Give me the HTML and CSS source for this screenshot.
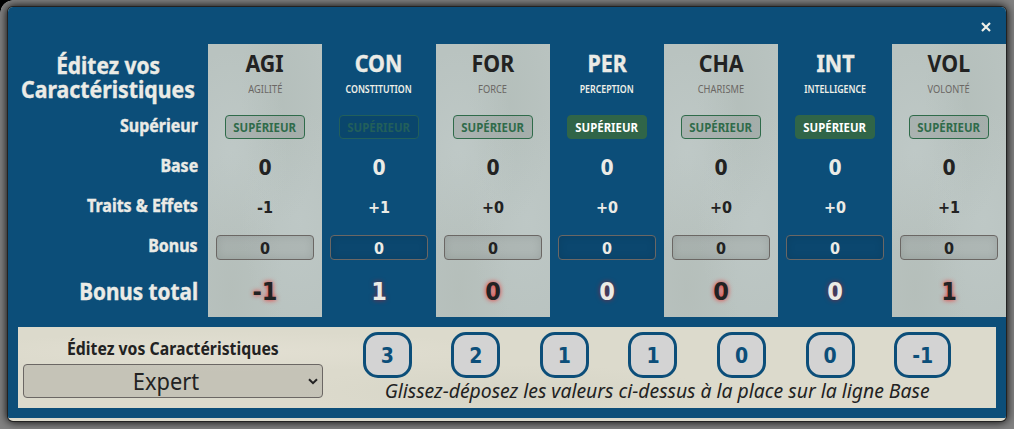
FILE: index.html
```
<!DOCTYPE html>
<html lang="fr">
<head>
<meta charset="utf-8">
<title>Caractéristiques</title>
<link rel="stylesheet" href="styles.css">
</head>
<body>
<span class="corner"></span>
<main class="window">
  <header class="bar">
    <button class="close" aria-label="Fermer"><svg width="10" height="10" viewBox="0 0 10 10"><path d="M1 1L9 9M9 1L1 9"/></svg></button>
  </header>
  <section class="table">
    <div class="labels">
      <h1><span class="t-vos">Éditez vos</span><span class="t-car">Caractéristiques</span></h1>
      <div class="lab"><span>Supérieur</span></div>
      <div class="lab"><span>Base</span></div>
      <div class="lab"><span>Traits &amp; Effets</span></div>
      <div class="lab"><span>Bonus</span></div>
      <div class="lab total"><span>Bonus total</span></div>
    </div>
    <div class="col paper"><b class="abbr">AGI</b><small>AGILITÉ</small><div class="sup"><span>SUPÉRIEUR</span></div><div class="base">0</div><div class="trait">-1</div><div class="bonus">0</div><div class="sum">-1</div></div>
    <div class="col blue"><b class="abbr">CON</b><small>CONSTITUTION</small><div class="sup"><span>SUPÉRIEUR</span></div><div class="base">0</div><div class="trait">+1</div><div class="bonus">0</div><div class="sum">1</div></div>
    <div class="col paper"><b class="abbr">FOR</b><small>FORCE</small><div class="sup"><span>SUPÉRIEUR</span></div><div class="base">0</div><div class="trait">+0</div><div class="bonus">0</div><div class="sum">0</div></div>
    <div class="col blue"><b class="abbr">PER</b><small>PERCEPTION</small><div class="sup on"><span>SUPÉRIEUR</span></div><div class="base">0</div><div class="trait">+0</div><div class="bonus">0</div><div class="sum">0</div></div>
    <div class="col paper"><b class="abbr">CHA</b><small>CHARISME</small><div class="sup"><span>SUPÉRIEUR</span></div><div class="base">0</div><div class="trait">+0</div><div class="bonus">0</div><div class="sum">0</div></div>
    <div class="col blue"><b class="abbr">INT</b><small>INTELLIGENCE</small><div class="sup on"><span>SUPÉRIEUR</span></div><div class="base">0</div><div class="trait">+0</div><div class="bonus">0</div><div class="sum">0</div></div>
    <div class="col paper"><b class="abbr">VOL</b><small>VOLONTÉ</small><div class="sup"><span>SUPÉRIEUR</span></div><div class="base">0</div><div class="trait">+1</div><div class="bonus">0</div><div class="sum">1</div></div>
  </section>
  <section class="panel">
    <div class="mode">
      <div class="mode-label"><span>Éditez vos Caractéristiques</span></div>
      <div class="select"><span>Expert</span><svg width="10" height="7" viewBox="0 0 10 7"><path d="M1 1.2L5 5.2L9 1.2"/></svg></div>
    </div>
    <div class="pool">
      <div class="tokens"><b>3</b><b>2</b><b>1</b><b>1</b><b>0</b><b>0</b><b class="wide">-1</b></div>
      <div class="hint"><span>Glissez-déposez les valeurs ci-dessus à la place sur la ligne Base</span></div>
    </div>
  </section>
</main>
</body>
</html>
```
FILE: styles.css
```
* { box-sizing: border-box; }
body {
  margin: 0;
  width: 1014px;
  height: 429px;
  padding: 7px 8px 8px;
  overflow: hidden;
  background: #828282;
  font-family: "Noto Sans", sans-serif;
  color: #222;
}
.corner {
  position: absolute;
  left: 0;
  top: 0;
  width: 13px;
  height: 13px;
  background: radial-gradient(circle at 13px 13px, transparent 12.5px, #000 13px);
}
.window {
  height: 414px;
  background: #dcdacc;
  border-radius: 5px;
  overflow: hidden;
  box-shadow: 0 0 0 1px #222, 0 0 10px 1px #000;
}
.bar {
  height: 37px;
  padding: 15px 15px 0;
  display: flex;
  justify-content: flex-end;
  background: #0c4e79;
}
.close { width: 10px; height: 10px; padding: 0; border: 0; background: none; display: flex; }
.close path { fill: none; stroke: #f0f0e8; stroke-width: 2.2; }
.table { display: flex; height: 273px; background: #0c4e79; }
.labels {
  width: 200px;
  padding: 9px 10px 0 0;
  display: flex;
  flex-direction: column;
  align-items: flex-end;
  color: #ebebe6;
  font-weight: 700;
  -webkit-text-stroke: .4px #ebebe6;
}
.labels span, small, .abbr, .sup span, .mode-label span, .hint span, .select span {
  display: inline-block;
  white-space: nowrap;
}
h1 {
  margin: 0 -10px 0 0;
  width: 200px;
  height: 52px;
  display: flex;
  flex-direction: column;
  align-items: center;
  font-size: 23px;
  line-height: 24px;
}
.t-vos { transform: scaleX(.91); }
.t-car { transform: scaleX(.925); }
.lab { height: 40px; line-height: 41px; font-size: 17px; }
.lab span { transform-origin: right; transform: scaleX(.94); }
.total { height: 52px; line-height: 52px; font-size: 23px; }
.total span { transform: scaleX(.9); }
.col {
  width: 114px;
  height: 273px;
  display: flex;
  flex-direction: column;
  align-items: center;
  text-align: center;
}
.paper {
  background:
    radial-gradient(ellipse at 20% 40%, rgba(203,213,213,.3), transparent 45%),
    radial-gradient(ellipse at 65% 20%, rgba(168,180,174,.25), transparent 40%),
    radial-gradient(ellipse at 80% 65%, rgba(200,210,210,.3), transparent 45%),
    radial-gradient(ellipse at 20% 90%, rgba(172,180,173,.3), transparent 40%),
    #b9c3c0;
}
.blue { color: #ebebe6; }
.abbr { height: 40px; line-height: 39px; font-size: 23px; transform: scaleX(.93); }
.blue .abbr { -webkit-text-stroke: .4px #ebebe6; }
small {
  height: 10px;
  line-height: 10px;
  font-size: 10px;
  color: #6b6764;
  transform: scaleX(.93);
}
.blue small { color: #f0f0e8; font-weight: 600; transform: scaleX(.88); }
.sup {
  margin-top: 21px;
  width: 80px;
  height: 24px;
  flex: none;
  border: 1px solid #2f6b4a;
  border-radius: 4px;
  background: rgba(0,0,0,.1);
  color: #2f6b4a;
  font-size: 11.5px;
  line-height: 23px;
  font-weight: 700;
}
.sup span { margin: 0 -10px; transform: scaleX(.99); }
.blue .sup { border-color: #225f5b; color: #225f5b; }
.blue .sup.on { background: #306548; border-color: #306548; color: #fff; }
.base, .trait, .bonus, .sum, .tokens {
  font-family: "DejaVu Sans Condensed", "DejaVu Sans", sans-serif;
  font-stretch: condensed;
  font-weight: 700;
}
.base { height: 58px; line-height: 58px; font-size: 21px; }
.trait { height: 22px; line-height: 22px; font-size: 16px; }
.bonus {
  margin-top: 16px;
  width: 98px;
  height: 25px;
  flex: none;
  line-height: 25px;
  font-size: 16px;
  border: 1px solid #6b6764;
  border-radius: 4px;
  background: rgba(0,0,0,.08);
  box-shadow: inset 0 0 8px rgba(0,0,0,.1);
}
.sum { height: 57px; line-height: 64px; font-size: 25px; text-shadow: 0 0 5px rgba(255,0,0,.8); }
.blue .sum { text-shadow: 0 0 5px rgba(255,0,0,.5); }
.panel {
  height: 101px;
  border: 10px solid #0c4e79;
  padding: 5px;
  display: flex;
  background:
    radial-gradient(ellipse at 22% 30%, rgba(232,228,216,.5), transparent 25%),
    radial-gradient(ellipse at 50% 80%, rgba(200,201,186,.3), transparent 30%),
    #dcdacc;
}
.mode { width: 300px; }
.mode-label { height: 32px; line-height: 33px; text-align: center; font-size: 17px; font-weight: 700; }
.mode-label span { transform: scaleX(.93); }
.select {
  height: 34px;
  padding-right: 4px;
  display: grid;
  grid-template-columns: 1fr 10px;
  align-items: center;
  text-align: center;
  font-size: 23px;
  line-height: 32px;
  border: 1px solid #6b6764;
  border-radius: 4px;
  background: rgba(0,0,0,.1);
}
.select span { transform: scaleX(.95); }
.select path { fill: none; stroke: #222; stroke-width: 2; }
.pool { margin-left: 20px; width: 628px; }
.tokens { display: flex; justify-content: space-around; font-size: 21px; }
.tokens b {
  width: 49px;
  height: 46px;
  line-height: 42px;
  text-align: center;
  color: #0c4e79;
  background: #d3d3d3;
  border: 3px solid #0c4e79;
  border-radius: 15px;
}
.tokens .wide { width: 57px; }
.hint { height: 26px; line-height: 26px; text-align: center; font-size: 19px; font-style: italic; }
.hint span { transform: scaleX(1.02); }
```
